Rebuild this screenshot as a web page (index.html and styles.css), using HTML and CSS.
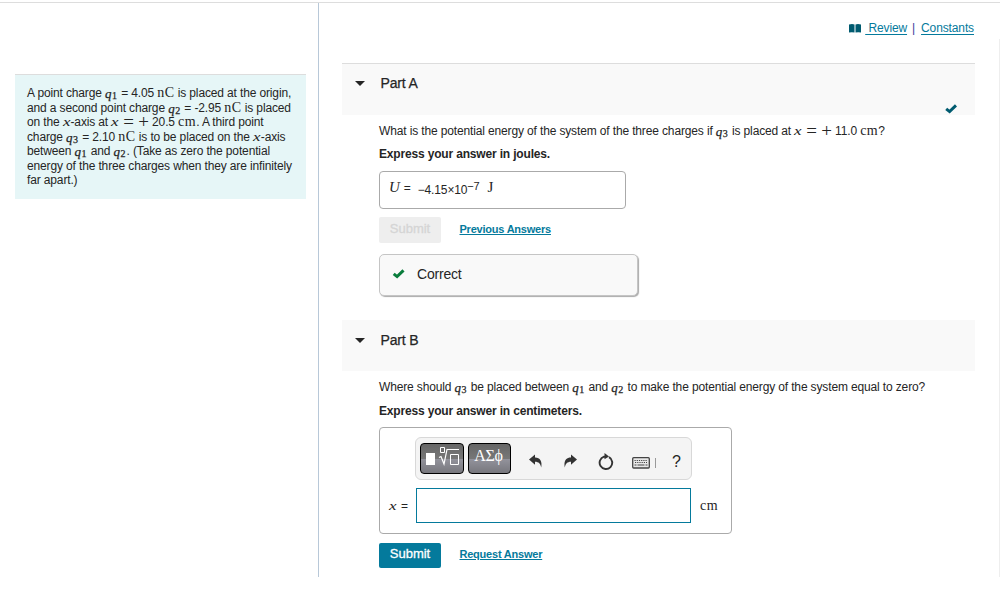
FILE: index.html
```html
<!doctype html>
<html lang="en">
<head>
<meta charset="utf-8">
<title>Potential Energy of Three Charges</title>
<link rel="stylesheet" href="styles.css">
</head>
<body>
<div class="page">
	<aside class="sidebar">
		<div class="intro">
			A point charge <var>q<sub>1</sub></var> = 4.05 <span class="unit">nC</span> is placed at the origin,<br>
			and a second point charge <var>q<sub>2</sub></var> = -2.95 <span class="unit">nC</span> is placed<br>
			on the <var class="x">x</var>-axis at <var class="x">x</var> <span class="op">=</span> <span class="op">+</span> 20.5 <span class="unit">cm</span>. A third point<br>
			charge <var>q<sub>3</sub></var> = 2.10 <span class="unit">nC</span> is to be placed on the <var class="x">x</var>-axis<br>
			between <var>q<sub>1</sub></var> and <var>q<sub>2</sub></var>. (Take as zero the potential<br>
			energy of the three charges when they are infinitely<br>
			far apart.)
		</div>
	</aside>
	<main>
		<nav class="links">
			<svg width="12" height="9" viewBox="0 0 12 9"><path d="M0 0.6Q3-.3 5.5.5V8.6Q3 7.8 0 8.6ZM6.5.5Q9-.3 12 .6V8.6Q9 7.8 6.5 8.6Z" fill="#005b70"/></svg>
			<a href="#" class="review">&nbsp;Review</a>
			<span class="bar">|</span>
			<a href="#">Constants</a>
		</nav>

		<section>
			<header class="part first">
				<i class="arrow"></i>
				<h2>Part A</h2>
				<svg class="done" width="12" height="10" viewBox="0 0 12 10"><path d="M1.200 4.800L4.600 7.600L11 1.400" fill="none" stroke="#005b70" stroke-width="3"/></svg>
			</header>
			<div class="body">
				<p class="question">What is the potential energy of the system of the three charges if <var>q<sub>3</sub></var> is placed at <var class="x">x</var> <span class="op">=</span> <span class="op">+</span> 11.0 <span class="unit">cm</span>?</p>
				<p class="express">Express your answer in joules.</p>
				<div class="answer"><var class="big">U</var><span class="eq">=</span><span class="value">−4.15×10<sup>−7</sup></span><span class="unit">J</span></div>
				<div class="actions">
					<button class="submit" disabled>Submit</button>
					<a href="#">Previous Answers</a>
				</div>
				<div class="feedback">
					<svg width="13" height="10" viewBox="0 0 12 10"><path d="M1.200 4.800L4.600 7.600L11 1.400" fill="none" stroke="#0a7d3c" stroke-width="3"/></svg>
					Correct
				</div>
			</div>
		</section>

		<section>
			<header class="part">
				<i class="arrow"></i>
				<h2>Part B</h2>
			</header>
			<div class="body">
				<p class="question">Where should <var>q<sub>3</sub></var> be placed between <var>q<sub>1</sub></var> and <var>q<sub>2</sub></var> to make the potential energy of the system equal to zero?</p>
				<p class="express low">Express your answer in centimeters.</p>
				<div class="editor">
					<div class="toolbar">
						<button class="tool">
							<svg width="34" height="22" viewBox="0 0 34 22"><path d="M0 9h9v12h-9z" fill="#fff"/><path d="M14.500 3.500h4v5h-4zM24.500 10.500h8v10h-8z" fill="none" stroke="#fff"/><path d="M13 13.500l2-1l3 7.500L21 5.500H33" fill="none" stroke="#fff" stroke-width="1.200"/></svg>
						</button>
						<button class="tool greek">ΑΣϕ</button>
						<svg class="undo" width="14" height="14" viewBox="0 0 14 14"><path d="M0 5.500L6 .5V3.600C11 3.500 13.500 7.500 12.200 13.500C11.500 9.500 9.800 7.800 6 7.700V10.700Z" fill="#333"/></svg>
						<svg class="redo" width="14" height="14" viewBox="0 0 14 14"><path d="M13 5.500L7 .5V3.600C2 3.500-.5 7.500.8 13.500C1.500 9.500 3.200 7.800 7 7.700V10.700Z" fill="#333"/></svg>
						<svg class="reset" width="16" height="17" viewBox="0 0 16 17"><path d="M11 4.200A6.300 6.300 0 1 1 6 3.700H8" fill="none" stroke="#333" stroke-width="1.900"/><path d="M6.500 0L11 3.500L6.500 6.300Z" fill="#333"/></svg>
						<svg class="keys" width="18" height="12" viewBox="0 0 18 12"><rect x=".7" y=".7" width="16.600" height="10.300" rx="1" fill="#e8e8e8" stroke="#444" stroke-width="1.300"/><path d="M2.500 3.500h13M3 5.500h12" stroke="#444" stroke-width="1.100" stroke-dasharray="1.200 1"/><path d="M2.500 8h2M5.500 8h7M13.500 8h2" stroke="#444" stroke-width="1.200"/></svg>
						<span class="sep"></span>
						<span class="help">?</span>
					</div>
					<div class="entry">
						<label><var class="x">x</var> =</label>
						<input type="text">
						<span class="unit">cm</span>
					</div>
				</div>
				<div class="actions">
					<button class="submit">Submit</button>
					<a href="#">Request Answer</a>
				</div>
			</div>
		</section>
	</main>
	<div class="edge"></div>
</div>
</body>
</html>
```
FILE: styles.css
```css
* {
	box-sizing: border-box;
	margin: 0;
	padding: 0;
}

body {
	background: #fff;
	color: #252525;
	font-family: "Liberation Sans", Arial, sans-serif;
	font-size: 12px;
	letter-spacing: -.14px;
	overflow: hidden;
}

a {
	color: #047a9c;
	text-underline-offset: 2px;
}

svg {
	display: block;
	flex: none;
}

.page {
	border-top: 1px solid #ddd;
	display: flex;
	height: 575px;
	margin-top: 2px;
}

.sidebar {
	border-right: 1px solid #b8c8d8;
	flex: none;
	padding: 71px 12px 0 15px;
	width: 319px;
}

.intro {
	background: #e6f6f7;
	border-top: 1px solid #ddd;
	height: 125px;
	line-height: 14.5px;
	padding: 11px 0 0 12px;
	white-space: nowrap;
}

/* math */
var, .unit, .op {
	font-family: "Liberation Serif", serif;
	font-size: 14px;
	letter-spacing: 0;
	line-height: 0;
}

var {
	font-size: 13px;
	margin-right: 1px;
	vertical-align: -1px;
	-webkit-text-stroke: .25px;
}

var sub {
	font-size: 10px;
	font-style: normal;
	line-height: 0;
	margin-left: .5px;
	vertical-align: -1px;
}

.x {
	display: inline-block;
	margin: 0 2px 0 0;
	transform: scaleX(1.3);
	transform-origin: left;
	vertical-align: 0;
	-webkit-text-stroke: 0;
}

.big {
	font-size: 15px;
	-webkit-text-stroke: 0;
}

.unit {
	letter-spacing: .5px;
}

.op {
	font-size: 19px;
	margin-left: 1px;
	vertical-align: -2px;
}

main {
	flex: 1;
	padding: 0 24px 0 23px;
}

/* light line down the right side */
.edge {
	background: #eee;
	margin-top: 36px;
	width: 1px;
}

.links {
	align-items: center;
	display: flex;
	height: 60px;
	justify-content: flex-end;
	letter-spacing: -.12px;
	padding: 0 1px 10px 0;
}

.bar {
	color: #3b3b9c;
	margin: 0 6px 0 5px;
}

.review {
	margin-left: 4px;
}

.part {
	background: #f9f9f9;
	display: flex;
	height: 51px;
	padding: 13px 18px 0 13px;
}

.part.first {
	border-top: 1px solid #ddd;
	height: 52px;
	padding-top: 12px;
}

.arrow {
	border: 5px solid transparent;
	border-bottom: 0;
	border-top-color: #252525;
	height: 0;
	margin-top: 5px;
	width: 10px;
}

h2 {
	flex: 1;
	font-size: 14px;
	font-weight: normal;
	line-height: 14px;
	margin-left: 15.5px;
	-webkit-text-stroke: .25px #252525;
}

.done {
	margin-top: 28px;
}

.body {
	padding-left: 37px;
}

.question {
	height: 32px;
	line-height: 15px;
	padding-top: 9px;
	white-space: nowrap;
}

.express {
	font-weight: bold;
	height: 24px;
	letter-spacing: -.17px;
	line-height: 15px;
}

.express.low {
	padding-top: 1px;
}

.answer {
	align-items: baseline;
	border: 1px solid #aaa;
	border-radius: 4px;
	display: flex;
	height: 38px;
	padding: 9px 0 0 9px;
	width: 247px;
}

.eq {
	margin-left: 3px;
}

.value {
	margin: 0 8px 0 7px;
	position: relative;
	top: 2px;
}

.value sup {
	font-size: 11px;
	line-height: 0;
	vertical-align: 4px;
}

.answer .unit {
	font-size: 15px;
}

.actions {
	display: flex;
	margin-top: 8px;
}

.actions a {
	font-size: 11px;
	font-weight: bold;
	letter-spacing: -.22px;
	line-height: 13px;
	margin: 6px 0 0 18.5px;
	text-underline-offset: 1px;
}

.submit {
	background: #047a9c;
	border: 0;
	border-radius: 2px;
	color: #fff;
	font: 13px "Liberation Sans", Arial, sans-serif;
	height: 25px;
	padding-bottom: 4px;
	width: 62px;
	-webkit-text-stroke: .3px;
}

.submit:disabled {
	background: #eee;
	color: #d5d5d5;
	height: 26px;
}

.feedback {
	align-items: center;
	background: #f9f9f9;
	border: 1px solid #c5c5c5;
	border-radius: 5px;
	box-shadow: 1px 1px 1px #aaa;
	display: flex;
	font-size: 14px;
	gap: 12px;
	height: 42px;
	letter-spacing: -.2px;
	margin: 11px 0 24px;
	padding: 0 0 2px 12px;
	width: 259px;
}

.editor {
	border: 1px solid #aaa;
	border-radius: 4px;
	height: 107px;
	padding: 9px 0 0 9px;
	width: 353px;
}

.toolbar {
	align-items: flex-start;
	background: #f4f4f4;
	border: 1px solid #d8d8d8;
	border-radius: 6px;
	display: flex;
	height: 43px;
	margin-left: 26px;
	padding: 5px 0 0 4px;
	width: 277px;
}

.tool {
	background: linear-gradient(#666 0, #777 50%, #92929b 53%, #77777d 100%);
	border: 1px solid #000;
	border-radius: 4px;
	height: 31px;
	padding-left: 5px;
	width: 44px;
}

.tool svg {
	margin-top: -7px;
}

.greek {
	color: #fff;
	font: 16px "Liberation Serif", serif;
	letter-spacing: -.2px;
	margin-left: 4px;
	padding: 0 2px 5px 0;
	width: 43px;
}

.undo {
	margin: 11px 0 0 18px;
}

.redo {
	margin: 11px 0 0 21px;
}

.reset {
	margin: 10px 0 0 20px;
}

.keys {
	margin: 14px 0 0 18px;
}

.sep {
	background: #999;
	height: 10px;
	margin: 15px 0 0 5px;
	width: 1px;
}

.help {
	font-size: 16px;
	line-height: 18px;
	margin: 10px 0 0 16px;
}

.entry {
	align-items: center;
	display: flex;
	margin-top: 8px;
}

.entry label {
	width: 27px;
}

.entry .x {
	margin-right: 3px;
}

.entry input {
	border: 1px solid #047a9c;
	height: 35px;
	margin-right: 9px;
	width: 275px;
}

.editor + .actions {
	margin-top: 9px;
}

.editor + .actions a {
	margin-top: 5px;
}
```
